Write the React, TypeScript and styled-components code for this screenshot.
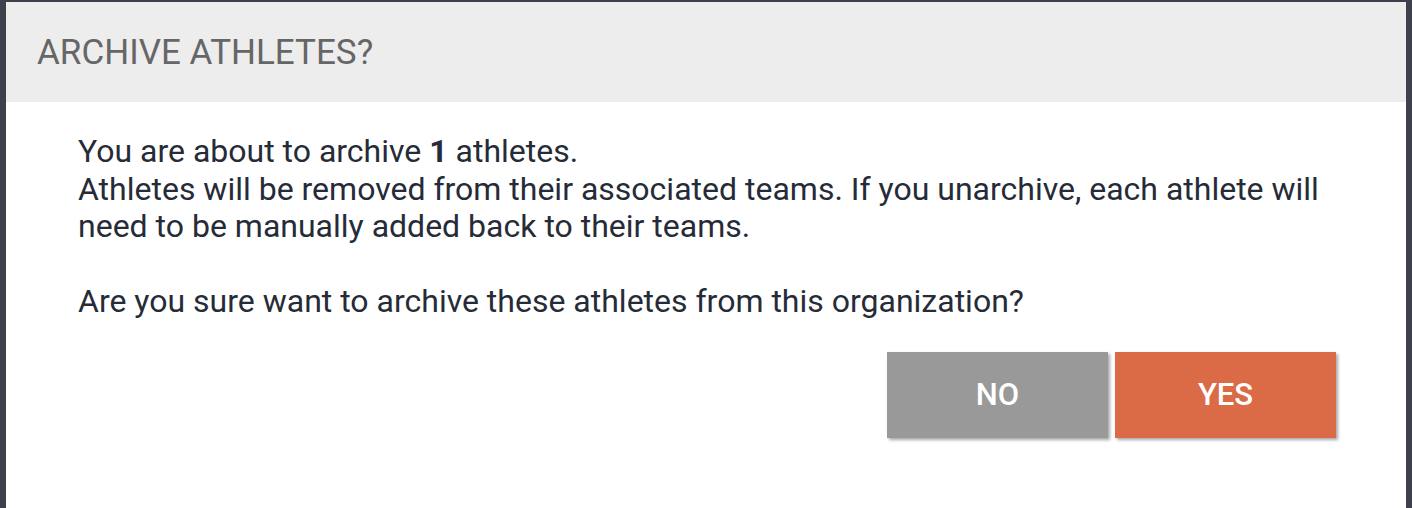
import React from "react";
import styled, { createGlobalStyle } from "styled-components";

const GlobalStyle = createGlobalStyle`
  html, body {
    margin: 0;
    padding: 0;
    background: #3e414b;
    overflow: hidden;
  }
  body {
    font-family: Roboto, "Liberation Sans", sans-serif;
  }
`;

const Backdrop = styled.div`
  width: 1412px;
  height: 508px;
  box-sizing: border-box;
  padding: 2px 6px 0 6px;
  background: #3e414b;
`;

const Dialog = styled.div`
  height: 100%;
  background: #ffffff;
  display: flex;
  flex-direction: column;
`;

const Header = styled.div`
  height: 100px;
  background: #ededed;
  display: flex;
  align-items: center;
  padding-left: 31px;
`;

const Title = styled.h2`
  margin: 0;
  font-size: 35px;
  font-weight: 400;
  color: #666666;
`;

const Body = styled.div`
  padding: 31px 70px 0 72px;
  display: flex;
  flex-direction: column;
`;

const Message = styled.p`
  margin: 0;
  font-size: 32px;
  line-height: 37.5px;
  color: #262b38;
`;

const Actions = styled.div`
  display: flex;
  justify-content: flex-end;
  gap: 7px;
  margin-top: 31px;
`;

const Button = styled.button<{ $tone: "neutral" | "primary" }>`
  width: 221px;
  height: 86px;
  border: none;
  font-family: Roboto, "Liberation Sans", sans-serif;
  font-size: 31px;
  font-weight: 500;
  color: #ffffff;
  background: ${(p) => (p.$tone === "primary" ? "#db6a46" : "#999999")};
  box-shadow: 2px 2px 3px rgba(0, 0, 0, 0.35);
  cursor: pointer;
`;

export default function App() {
  return (
    <Backdrop>
      <GlobalStyle />
      <Dialog>
        <Header>
          <Title>ARCHIVE ATHLETES?</Title>
        </Header>
        <Body>
          <Message>
            You are about to archive <strong>1</strong> athletes.
            <br />
            Athletes will be removed from their associated teams. If you unarchive, each athlete will
            need to be manually added back to their teams.
            <br />
            <br />
            Are you sure want to archive these athletes from this organization?
          </Message>
          <Actions>
            <Button $tone="neutral">NO</Button>
            <Button $tone="primary">YES</Button>
          </Actions>
        </Body>
      </Dialog>
    </Backdrop>
  );
}
